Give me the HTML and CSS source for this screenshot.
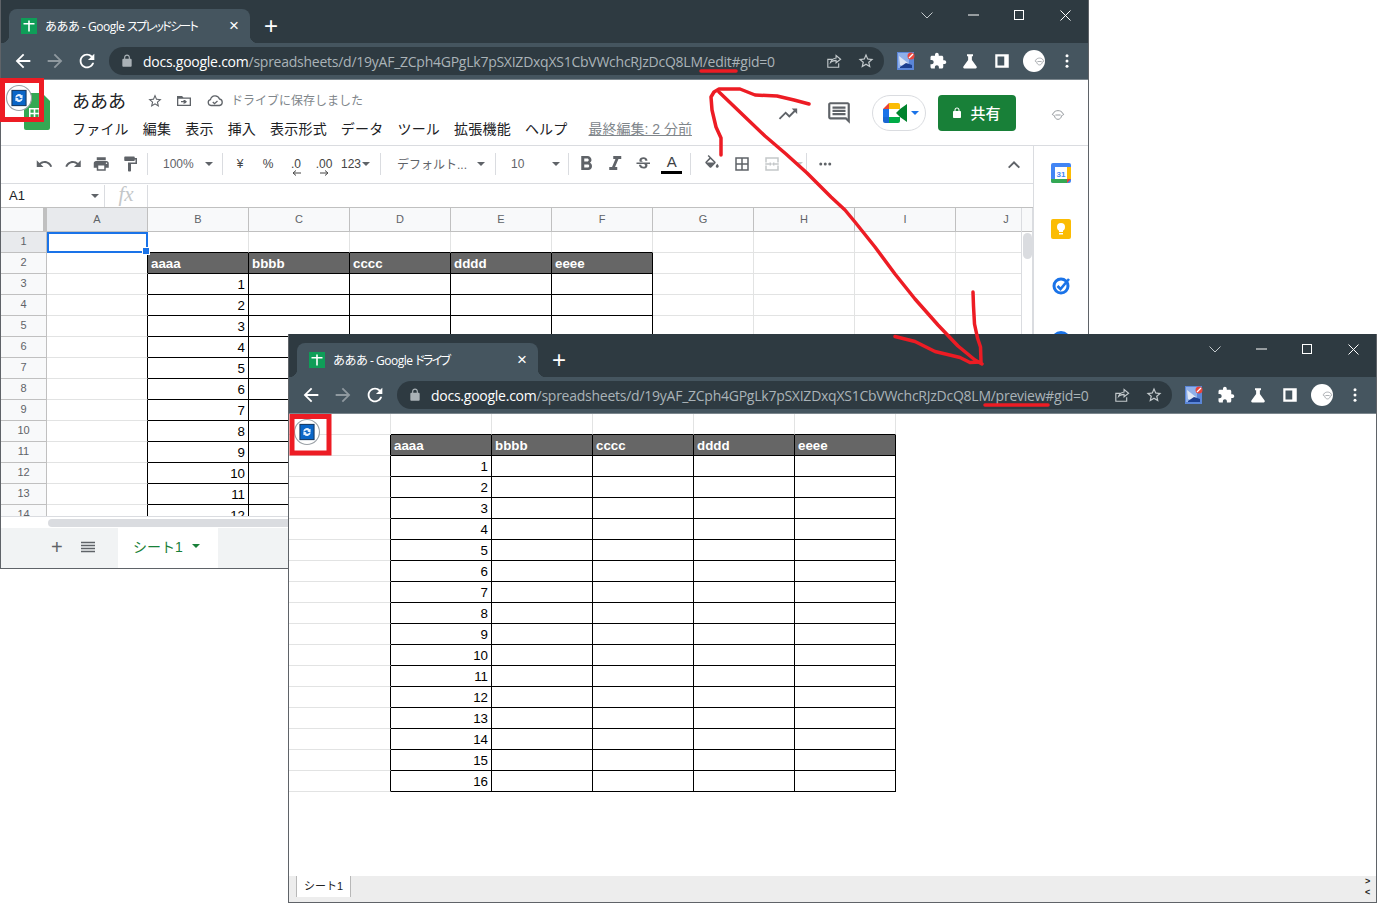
FILE: index.html
```html
<!DOCTYPE html>
<html lang="ja">
<head>
    <meta charset="UTF-8">
    <title>edit / preview</title>
    <link rel="stylesheet" href="styles.css">
</head>
<body>
    <svg class="sprite" xmlns="http://www.w3.org/2000/svg">
        <symbol id="i-back" viewBox="0 0 24 24"><path d="M20 11H7.83l5.59-5.59L12 4l-8 8 8 8 1.41-1.41L7.83 13H20v-2z"/></symbol>
        <symbol id="i-fwd" viewBox="0 0 24 24"><path d="M12 4l-1.41 1.41L16.17 11H4v2h12.17l-5.58 5.59L12 20l8-8z"/></symbol>
        <symbol id="i-reload" viewBox="0 0 24 24"><path d="M17.65 6.35C16.2 4.9 14.21 4 12 4c-4.42 0-7.99 3.58-7.99 8s3.57 8 7.99 8c3.73 0 6.84-2.55 7.73-6h-2.08c-.82 2.33-3.04 4-5.65 4-3.31 0-6-2.69-6-6s2.69-6 6-6c1.66 0 3.14.69 4.22 1.78L13 11h7V4l-2.35 2.35z"/></symbol>
        <symbol id="i-lock" viewBox="0 0 24 24"><path d="M18 8h-1V6c0-2.76-2.24-5-5-5S7 3.24 7 6v2H6c-1.1 0-2 .9-2 2v10c0 1.1.9 2 2 2h12c1.1 0 2-.9 2-2V10c0-1.1-.9-2-2-2zM9 6c0-1.66 1.34-3 3-3s3 1.34 3 3v2H9V6z"/></symbol>
        <symbol id="i-star" viewBox="0 0 24 24"><path d="M22 9.24l-7.19-.62L12 2 9.19 8.63 2 9.24l5.46 4.73L5.82 21 12 17.27 18.18 21l-1.63-7.03L22 9.24zM12 15.4l-3.76 2.27 1-4.28-3.32-2.88 4.38-.38L12 6.1l1.71 4.04 4.38.38-3.32 2.88 1 4.28L12 15.4z"/></symbol>
        <symbol id="i-share" viewBox="0 0 24 24"><path d="M3 9h7v1.500H4.500v9h13V15H19v6H3zM14 3l8 6.500-8 6.500v-3.700c-3.500 0-6 1.200-8 4.200.6-4.600 3.200-8 8-8.700zm1.500 3.200v2.500c-2.900.2-5 1.300-6.300 3 1.700-.9 3.700-1.300 6.300-1.200v2.300l4.100-3.300z"/></symbol>
        <symbol id="i-puzzle" viewBox="0 0 24 24"><path d="M20.5 11H19V7c0-1.1-.9-2-2-2h-4V3.500C13 2.120 11.880 1 10.500 1S8 2.120 8 3.500V5H4c-1.1 0-1.990.9-1.990 2v3.800H3.500c1.490 0 2.700 1.210 2.700 2.700s-1.210 2.700-2.700 2.700H2V20c0 1.100.9 2 2 2h3.800v-1.500c0-1.490 1.210-2.700 2.700-2.700 1.490 0 2.700 1.210 2.700 2.700V22H17c1.100 0 2-.9 2-2v-4h1.500c1.380 0 2.500-1.120 2.500-2.500S21.880 11 20.500 11z"/></symbol>
        <symbol id="i-flask" viewBox="0 0 24 24"><path d="M20.800 19.400L14.500 10.500V5.500h1.500V3H8v2.500h1.500v5L3.200 19.400c-.7 1.100 0 2.600 1.300 2.600h15c1.300 0 2-1.500 1.300-2.600z"/></symbol>
        <symbol id="i-side" viewBox="0 0 24 24"><path d="M3 3h18v18H3zM6 6v12h9V6z" fill-rule="evenodd"/></symbol>
        <symbol id="i-dots" viewBox="0 0 24 24"><circle cx="12" cy="5" r="2"/><circle cx="12" cy="12" r="2"/><circle cx="12" cy="19" r="2"/></symbol>
        <symbol id="i-ext" viewBox="0 0 18 18">
            <rect width="17" height="18" fill="#5b86d8"/>
            <rect x="1" y="1" width="11" height="15" fill="#8fb0ea"/>
            <path d="M2 4l9 7-3 4-5-2z" fill="#dfe7f5"/>
            <path d="M3 15l6-4 6 2v3H3z" fill="#1c3f8f"/>
            <circle cx="14" cy="4" r="3.500" fill="#e8453c"/>
            <path d="M12 6l4-4" stroke="#fff" stroke-width="1.200"/>
        </symbol>
        <symbol id="i-doodle" viewBox="0 0 16 16">
            <path d="M3 6c0-2 3-3 5-3s5 1 5 3c1 0 2 1 1 2-1 .5-2 .5-2 1 0 2-2 4-4 4s-4-2-4-4c0-.5-1-.5-2-1-1-1 0-2 1-2zM5 8h6" fill="none" stroke="#8a8f94"/>
        </symbol>
        <symbol id="i-sheet" viewBox="0 0 16 16">
            <rect width="16" height="16" fill="#0f9d58"/>
            <path d="M2.500 5h4.700V2.500h1.600V5h4.700v1.500H8.800V13.500H7.200V6.500H2.500z" fill="#fff"/>
        </symbol>
        <symbol id="i-badge" viewBox="0 0 24 24">
            <circle cx="12" cy="12" r="11.500" fill="#fff" stroke="#9aa0a6"/>
            <rect x="5.500" y="5" width="13" height="14" fill="#0a66c8" stroke="#173a63"/>
            <path d="M8.500 11.500a3.500 3.500 0 0 1 6-2l.8-.6v3h-3l1-.9a2.300 2.300 0 0 0-3.600.5zM15.500 12.500a3.500 3.500 0 0 1-6 2l-.8.6v-3h3l-1 .9a2.300 2.300 0 0 0 3.600-.5z" fill="#e6f2ff"/>
        </symbol>
    </svg>

    <!-- edit window -->
    <div class="window window-edit">
        <div class="tabstrip">
            <div class="tab">
                <svg class="tab-icon"><use href="#i-sheet"/></svg>
                <span class="tab-title">あああ - Google <span class="kana">スプレッドシート</span></span>
                <span class="tab-close">×</span>
            </div>
            <span class="new-tab">+</span>
            <div class="win-controls">
                <span class="ctrl"><svg width="12" height="7"><path d="M.5.500l5.500 5.500L11.500.500" fill="none" stroke="#c4cacd"/></svg></span>
                <span class="ctrl"><svg width="11" height="2"><path d="M0 1h11" stroke="#fff"/></svg></span>
                <span class="ctrl"><svg width="10" height="10"><rect x=".5" y=".5" width="9" height="9" fill="none" stroke="#fff"/></svg></span>
                <span class="ctrl"><svg width="11" height="11"><path d="M.5.500l10 10M10.500.500l-10 10" stroke="#fff"/></svg></span>
            </div>
        </div>
        <div class="navbar">
            <svg class="nav-icon white"><use href="#i-back"/></svg>
            <svg class="nav-icon dim"><use href="#i-fwd"/></svg>
            <svg class="nav-icon white"><use href="#i-reload"/></svg>
            <div class="omnibox">
                <svg class="lock"><use href="#i-lock"/></svg>
                <span class="url"><b>docs.google.com</b>/spreadsheets/d/19yAF_ZCph4GPgLk7pSXIZDxqXS1CbVWchcRJzDcQ8LM/edit#gid=0</span>
                <svg class="omni-icon"><use href="#i-share"/></svg>
                <svg class="omni-icon"><use href="#i-star"/></svg>
            </div>
            <svg class="ext"><use href="#i-ext"/></svg>
            <svg class="nav-btn"><use href="#i-puzzle"/></svg>
            <svg class="nav-btn"><use href="#i-flask"/></svg>
            <svg class="nav-btn side-btn"><use href="#i-side"/></svg>
            <span class="avatar"><svg><use href="#i-doodle"/></svg></span>
            <svg class="nav-btn dots"><use href="#i-dots"/></svg>
        </div>
        <div class="page">
            <header class="doc-header">
                <svg class="doc-logo" viewBox="0 0 26 37"><path d="M2 0h16l8 8v27a2 2 0 0 1-2 2H2a2 2 0 0 1-2-2V2a2 2 0 0 1 2-2z" fill="#34a853"/><path d="M5 15h11v11H5zm1.500 1.500v3.200h3.200v-3.200zm4.800 0v3.200h3.200v-3.200zm-4.800 4.800v3.200h3.200v-3.200zm4.800 0v3.200h3.200v-3.200z" fill="#fff" fill-rule="evenodd"/></svg>
                <div class="doc-titles">
                    <div class="title-row">
                        <span class="doc-title">あああ</span>
                        <svg class="title-icon star-icon"><use href="#i-star"/></svg>
                        <svg class="title-icon folder-icon" viewBox="0 0 16 16"><path d="M1 3h5l1.500 1.500H15V13H1zM2.300 5.800v5.900h11.400V5.800zM7 7h2l2 1.700-2 1.700H7l1-1.100H5V8h3z" fill="#5f6368" fill-rule="evenodd"/></svg>
                        <svg class="title-icon cloud-icon" viewBox="0 0 16 16"><path d="M4 12.500a3 3 0 0 1-.5-5.900A4.700 4.700 0 0 1 12.500 6a3.300 3.300 0 0 1 0 6.500zM5.800 9l1.700 1.700L10.500 8" fill="none" stroke="#5f6368" stroke-width="1.300"/></svg>
                        <span class="saved">ドライブに保存しました</span>
                    </div>
                    <nav class="menu">
                        <span>ファイル</span><span>編集</span><span>表示</span><span>挿入</span><span>表示形式</span><span>データ</span><span>ツール</span><span>拡張機能</span><span>ヘルプ</span>
                        <a class="last-edit">最終編集: 2 分前</a>
                    </nav>
                </div>
                <div class="header-actions">
                    <svg class="act-trend" viewBox="0 0 24 24"><path d="M16 6l2.290 2.290-4.880 4.880-4-4L2 16.590 3.410 18l6-6 4 4 6.300-6.290L22 12V6z" fill="#5f6368"/></svg>
                    <svg class="act-comment" viewBox="0 0 24 24"><path d="M20 4v13.200L18.800 16H4V4h16m0-2H4c-1.100 0-2 .9-2 2v12c0 1.100.9 2 2 2h14l4 4V4c0-1.100-.9-2-2-2zM6 12h12v2H6zm0-3h12v2H6zm0-3h12v2H6z" fill="#5f6368"/></svg>
                    <div class="meet">
                        <svg width="24" height="20" viewBox="0 0 24 20">
                            <path d="M6 0h9a2 2 0 0 1 2 2v4H6z" fill="#fbbc04"/>
                            <path d="M6 0v6H0z" fill="#ea4335"/>
                            <path d="M0 6h6v8H0z" fill="#1a73e8"/>
                            <path d="M0 14h6v6H2a2 2 0 0 1-2-2z" fill="#1967d2"/>
                            <path d="M6 14h11v4a2 2 0 0 1-2 2H6z" fill="#00ac47"/>
                            <path d="M13 10l4-4v8zM17 6l7-5v18l-7-5z" fill="#00832d"/>
                        </svg>
                        <span class="caret blue"></span>
                    </div>
                    <button class="share"><svg class="share-lock"><use href="#i-lock"/></svg>共有</button>
                    <svg class="act-avatar"><use href="#i-doodle"/></svg>
                </div>
            </header>
            <div class="work">
                <div class="work-main">
                    <div class="toolbar">
                        <svg class="tool" viewBox="0 0 24 24"><path d="M12.500 8c-2.650 0-5.050.99-6.900 2.600L2 7v9h9l-3.620-3.620c1.390-1.160 3.160-1.880 5.120-1.880 3.540 0 6.550 2.310 7.600 5.500l2.370-.78C21.080 11.030 17.150 8 12.500 8z"/></svg>
                        <svg class="tool" viewBox="0 0 24 24"><path d="M18.400 10.600C16.550 8.990 14.150 8 11.500 8c-4.650 0-8.580 3.030-9.960 7.220L3.900 16c1.050-3.190 4.050-5.500 7.600-5.500 1.950 0 3.730.72 5.120 1.880L13 16h9V7l-3.600 3.600z"/></svg>
                        <svg class="tool" viewBox="0 0 24 24"><path d="M19 8H5c-1.660 0-3 1.340-3 3v6h4v4h12v-4h4v-6c0-1.660-1.340-3-3-3zm-3 11H8v-5h8v5zm3-7c-.55 0-1-.45-1-1s.45-1 1-1 1 .45 1 1-.45 1-1 1zm-1-9H6v4h12V3z"/></svg>
                        <svg class="tool" viewBox="0 0 24 24"><path d="M18 4V3c0-.55-.45-1-1-1H5c-.55 0-1 .45-1 1v4c0 .55.45 1 1 1h12c.55 0 1-.45 1-1V6h1v4H9v11c0 .55.45 1 1 1h2c.55 0 1-.45 1-1v-9h8V4h-3z"/></svg>
                        <span class="sep sep-a"></span>
                        <div class="drop drop-zoom"><span>100%</span><span class="caret"></span></div>
                        <span class="sep sep-b"></span>
                        <span class="tool-text">¥</span>
                        <span class="tool-text">%</span>
                        <span class="tool-text dec">.0<svg width="9" height="6"><path d="M9 3H2M4 .5L1 3l3 2.500" fill="none" stroke="#444"/></svg></span>
                        <span class="tool-text dec">.00<svg width="9" height="6"><path d="M0 3h7M5 .5L8 3 5 5.500" fill="none" stroke="#444"/></svg></span>
                        <div class="drop drop-num"><span>123</span><span class="caret"></span></div>
                        <span class="sep sep-c"></span>
                        <div class="drop drop-font"><span>デフォルト...</span><span class="caret"></span></div>
                        <span class="sep"></span>
                        <div class="drop drop-size"><span>10</span><span class="caret"></span></div>
                        <span class="sep sep-b"></span>
                        <svg class="tool big" viewBox="0 0 24 24"><path d="M15.600 10.790c.97-.67 1.650-1.770 1.650-2.790 0-2.260-1.750-4-4-4H7v14h7.040c2.090 0 3.710-1.700 3.710-3.790 0-1.520-.86-2.820-2.150-3.420zM10 6.500h3c.83 0 1.500.67 1.500 1.500s-.67 1.500-1.500 1.500h-3v-3zm3.500 9H10v-3h3.500c.83 0 1.500.67 1.500 1.500s-.67 1.500-1.500 1.500z"/></svg>
                        <svg class="tool big" viewBox="0 0 24 24"><path d="M10 4v3h2.210l-3.420 8H6v3h8v-3h-2.210l3.420-8H18V4z"/></svg>
                        <svg class="tool" viewBox="0 0 24 24"><path d="M6.850 7.080C6.850 4.370 9.450 3 12.240 3c1.640 0 3 .49 3.900 1.280.77.65 1.460 1.730 1.460 3.240h-3.010c0-.31-.05-.59-.15-.85-.29-.86-1.200-1.280-2.250-1.280-1.860 0-2.340 1.020-2.340 1.700 0 .48.25.88.74 1.210.38.25.77.48 1.410.7H7.390c-.21-.34-.54-.89-.54-1.920zM21 12v-2H3v2h9.620c1.150.45 1.960.75 1.960 1.970 0 1-.81 1.670-2.280 1.670-1.540 0-2.930-.54-2.930-2.510H6.400c0 .55.08 1.130.24 1.580.81 2.290 3.290 3.300 5.670 3.300 2.270 0 5.300-.89 5.300-4.050 0-.3-.01-1.160-.48-1.940H21V12z"/></svg>
                        <span class="tool-color"><span>A</span><i></i></span>
                        <span class="sep sep-c sep-d"></span>
                        <svg class="tool wide" viewBox="0 0 24 24"><path d="M16.560 8.940L7.620 0 6.210 1.410l2.380 2.380-5.150 5.150c-.59.59-.59 1.540 0 2.120l5.500 5.500c.29.29.68.44 1.060.44s.77-.15 1.060-.44l5.500-5.500c.59-.58.59-1.530 0-2.120zM5.210 10L10 5.210 14.790 10H5.210zM19 11.500s-2 2.170-2 3.500c0 1.100.9 2 2 2s2-.9 2-2c0-1.330-2-3.500-2-3.500z"/></svg>
                        <svg class="tool wide" viewBox="0 0 24 24"><path d="M3 3v18h18V3H3zm8 16H5v-6h6v6zm0-8H5V5h6v6zm8 8h-6v-6h6v6zm0-8h-6V5h6v6z"/></svg>
                        <svg class="tool wide faded" viewBox="0 0 24 24"><path d="M3 3h18v7h-2V5H5v5H3zm0 11h2v5h14v-5h2v7H3zM3 11h6V9l3 3-3 3v-2H3zm18 0h-6V9l-3 3 3 3v-2h6z"/></svg>
                        <span class="drop drop-merge"><span class="caret faded-caret"></span></span>
                        <span class="sep sep-b"></span>
                        <svg class="tool more" viewBox="0 0 24 24"><circle cx="6" cy="12" r="2"/><circle cx="12" cy="12" r="2"/><circle cx="18" cy="12" r="2"/></svg>
                        <svg class="tool collapse" viewBox="0 0 24 24"><path d="M12 8l-8 8 1.800 1.800L12 11.600l6.200 6.200L20 16z"/></svg>
                    </div>
                    <div class="formula">
                        <span class="namebox"><span>A1</span><span class="caret"></span></span>
                        <span class="sep"></span>
                        <span class="fx">fx</span>
                        <span class="sep"></span>
                    </div>
                    <div class="grid-wrap">
                        <div class="grid-scroll">
                            <table class="sheet">
                                <colgroup><col class="col-rh"><col class="col-cell" span="10"></colgroup>
                                <tr class="col-heads"><th class="corner"></th><th class="on">A</th><th>B</th><th>C</th><th>D</th><th>E</th><th>F</th><th>G</th><th>H</th><th>I</th><th>J</th></tr>
                                <tr><th class="on">1</th><td class="sel"></td><td class="bb"></td><td class="bb"></td><td class="bb"></td><td class="bb"></td><td class="bb"></td><td></td><td></td><td></td><td></td></tr>
                                <tr><th>2</th><td class="br"></td><td class="hd">aaaa</td><td class="hd">bbbb</td><td class="hd">cccc</td><td class="hd">dddd</td><td class="hd">eeee</td><td></td><td></td><td></td><td></td></tr>
                                <tr><th>3</th><td class="br"></td><td class="d n">1</td><td class="d"></td><td class="d"></td><td class="d"></td><td class="d"></td><td></td><td></td><td></td><td></td></tr>
                                <tr><th>4</th><td class="br"></td><td class="d n">2</td><td class="d"></td><td class="d"></td><td class="d"></td><td class="d"></td><td></td><td></td><td></td><td></td></tr>
                                <tr><th>5</th><td class="br"></td><td class="d n">3</td><td class="d"></td><td class="d"></td><td class="d"></td><td class="d"></td><td></td><td></td><td></td><td></td></tr>
                                <tr><th>6</th><td class="br"></td><td class="d n">4</td><td class="d"></td><td class="d"></td><td class="d"></td><td class="d"></td><td></td><td></td><td></td><td></td></tr>
                                <tr><th>7</th><td class="br"></td><td class="d n">5</td><td class="d"></td><td class="d"></td><td class="d"></td><td class="d"></td><td></td><td></td><td></td><td></td></tr>
                                <tr><th>8</th><td class="br"></td><td class="d n">6</td><td class="d"></td><td class="d"></td><td class="d"></td><td class="d"></td><td></td><td></td><td></td><td></td></tr>
                                <tr><th>9</th><td class="br"></td><td class="d n">7</td><td class="d"></td><td class="d"></td><td class="d"></td><td class="d"></td><td></td><td></td><td></td><td></td></tr>
                                <tr><th>10</th><td class="br"></td><td class="d n">8</td><td class="d"></td><td class="d"></td><td class="d"></td><td class="d"></td><td></td><td></td><td></td><td></td></tr>
                                <tr><th>11</th><td class="br"></td><td class="d n">9</td><td class="d"></td><td class="d"></td><td class="d"></td><td class="d"></td><td></td><td></td><td></td><td></td></tr>
                                <tr><th>12</th><td class="br"></td><td class="d n">10</td><td class="d"></td><td class="d"></td><td class="d"></td><td class="d"></td><td></td><td></td><td></td><td></td></tr>
                                <tr><th>13</th><td class="br"></td><td class="d n">11</td><td class="d"></td><td class="d"></td><td class="d"></td><td class="d"></td><td></td><td></td><td></td><td></td></tr>
                                <tr><th>14</th><td class="br"></td><td class="d n">12</td><td class="d"></td><td class="d"></td><td class="d"></td><td class="d"></td><td></td><td></td><td></td><td></td></tr>
                            </table>
                        </div>
                        <div class="vscroll"><div class="vscroll-head"></div><div class="vscroll-thumb"></div></div>
                    </div>
                    <div class="hscroll"><div class="hscroll-thumb"></div></div>
                    <div class="sheet-tabs">
                        <span class="sheet-add">+</span>
                        <svg class="sheet-list" width="14" height="12"><path d="M0 1.500h14M0 4.500h14M0 7.500h14M0 10.500h14" stroke="#5f6368" stroke-width="1.600"/></svg>
                        <div class="sheet-tab"><span>シート1</span><span class="caret green"></span></div>
                    </div>
                </div>
                <aside class="side">
                    <svg class="side-icon" viewBox="0 0 20 20">
                        <rect width="20" height="20" rx="2" fill="#4285f4"/>
                        <rect x="4" y="4" width="12" height="12" fill="#fff"/>
                        <path d="M16 4h4v12h-4z" fill="#fbbc04"/>
                        <path d="M0 16h16v4H2a2 2 0 0 1-2-2z" fill="#34a853"/>
                        <path d="M16 16h4l-4 4z" fill="#ea4335"/>
                        <text x="10" y="13.500" class="cal-num">31</text>
                    </svg>
                    <svg class="side-icon" viewBox="0 0 20 20">
                        <rect width="20" height="20" rx="2" fill="#fbbc04"/>
                        <circle cx="10" cy="8" r="4" fill="#fff"/>
                        <rect x="8" y="11" width="4" height="2" fill="#fff"/>
                        <rect x="8" y="14" width="4" height="1.500" fill="#fff"/>
                    </svg>
                    <svg class="side-icon" viewBox="0 0 20 20">
                        <circle cx="10" cy="11" r="7" fill="none" stroke="#1a73e8" stroke-width="3"/>
                        <path d="M6.500 11l3 3L18 4" fill="none" stroke="#1a73e8" stroke-width="2.600"/>
                    </svg>
                    <svg class="side-icon" viewBox="0 0 20 20"><circle cx="10" cy="10" r="10" fill="#1a73e8"/></svg>
                </aside>
            </div>
        </div>
        <svg class="badge"><use href="#i-badge"/></svg>
    </div>

    <!-- preview window -->
    <div class="window window-preview">
        <div class="tabstrip">
            <div class="tab">
                <svg class="tab-icon"><use href="#i-sheet"/></svg>
                <span class="tab-title">あああ - Google <span class="kana">ドライブ</span></span>
                <span class="tab-close">×</span>
            </div>
            <span class="new-tab">+</span>
            <div class="win-controls">
                <span class="ctrl"><svg width="12" height="7"><path d="M.5.500l5.500 5.500L11.500.500" fill="none" stroke="#c4cacd"/></svg></span>
                <span class="ctrl"><svg width="11" height="2"><path d="M0 1h11" stroke="#fff"/></svg></span>
                <span class="ctrl"><svg width="10" height="10"><rect x=".5" y=".5" width="9" height="9" fill="none" stroke="#fff"/></svg></span>
                <span class="ctrl"><svg width="11" height="11"><path d="M.5.500l10 10M10.500.500l-10 10" stroke="#fff"/></svg></span>
            </div>
        </div>
        <div class="navbar">
            <svg class="nav-icon white"><use href="#i-back"/></svg>
            <svg class="nav-icon dim"><use href="#i-fwd"/></svg>
            <svg class="nav-icon white"><use href="#i-reload"/></svg>
            <div class="omnibox">
                <svg class="lock"><use href="#i-lock"/></svg>
                <span class="url"><b>docs.google.com</b>/spreadsheets/d/19yAF_ZCph4GPgLk7pSXIZDxqXS1CbVWchcRJzDcQ8LM/preview#gid=0</span>
                <svg class="omni-icon"><use href="#i-share"/></svg>
                <svg class="omni-icon"><use href="#i-star"/></svg>
            </div>
            <svg class="ext"><use href="#i-ext"/></svg>
            <svg class="nav-btn"><use href="#i-puzzle"/></svg>
            <svg class="nav-btn"><use href="#i-flask"/></svg>
            <svg class="nav-btn side-btn"><use href="#i-side"/></svg>
            <span class="avatar"><svg><use href="#i-doodle"/></svg></span>
            <svg class="nav-btn dots"><use href="#i-dots"/></svg>
        </div>
        <div class="page page-preview">
            <div class="preview-grid">
                <table class="sheet preview">
                    <colgroup><col class="col-first"><col class="col-cell" span="5"></colgroup>
                    <tr><td></td><td class="bb"></td><td class="bb"></td><td class="bb"></td><td class="bb"></td><td class="bb"></td></tr>
                    <tr><td class="br"></td><td class="hd">aaaa</td><td class="hd">bbbb</td><td class="hd">cccc</td><td class="hd">dddd</td><td class="hd">eeee</td></tr>
                    <tr><td class="br"></td><td class="d n">1</td><td class="d"></td><td class="d"></td><td class="d"></td><td class="d"></td></tr>
                    <tr><td class="br"></td><td class="d n">2</td><td class="d"></td><td class="d"></td><td class="d"></td><td class="d"></td></tr>
                    <tr><td class="br"></td><td class="d n">3</td><td class="d"></td><td class="d"></td><td class="d"></td><td class="d"></td></tr>
                    <tr><td class="br"></td><td class="d n">4</td><td class="d"></td><td class="d"></td><td class="d"></td><td class="d"></td></tr>
                    <tr><td class="br"></td><td class="d n">5</td><td class="d"></td><td class="d"></td><td class="d"></td><td class="d"></td></tr>
                    <tr><td class="br"></td><td class="d n">6</td><td class="d"></td><td class="d"></td><td class="d"></td><td class="d"></td></tr>
                    <tr><td class="br"></td><td class="d n">7</td><td class="d"></td><td class="d"></td><td class="d"></td><td class="d"></td></tr>
                    <tr><td class="br"></td><td class="d n">8</td><td class="d"></td><td class="d"></td><td class="d"></td><td class="d"></td></tr>
                    <tr><td class="br"></td><td class="d n">9</td><td class="d"></td><td class="d"></td><td class="d"></td><td class="d"></td></tr>
                    <tr><td class="br"></td><td class="d n">10</td><td class="d"></td><td class="d"></td><td class="d"></td><td class="d"></td></tr>
                    <tr><td class="br"></td><td class="d n">11</td><td class="d"></td><td class="d"></td><td class="d"></td><td class="d"></td></tr>
                    <tr><td class="br"></td><td class="d n">12</td><td class="d"></td><td class="d"></td><td class="d"></td><td class="d"></td></tr>
                    <tr><td class="br"></td><td class="d n">13</td><td class="d"></td><td class="d"></td><td class="d"></td><td class="d"></td></tr>
                    <tr><td class="br"></td><td class="d n">14</td><td class="d"></td><td class="d"></td><td class="d"></td><td class="d"></td></tr>
                    <tr><td class="br"></td><td class="d n">15</td><td class="d"></td><td class="d"></td><td class="d"></td><td class="d"></td></tr>
                    <tr><td class="br"></td><td class="d n">16</td><td class="d"></td><td class="d"></td><td class="d"></td><td class="d"></td></tr>
                </table>
            </div>
            <div class="preview-tabs">
                <span class="preview-tab">シート1</span>
                <span class="preview-arrows"><span>&gt;</span><span>&lt;</span></span>
            </div>
        </div>
        <svg class="badge"><use href="#i-badge"/></svg>
    </div>

    <!-- red marks drawn on top of the screenshot -->
    <svg class="marks" width="1378" height="903" viewBox="0 0 1378 903">
        <rect x="2.500" y="80.500" width="39" height="39"/>
        <rect x="292" y="416.500" width="37" height="36.500"/>
        <path class="thin" d="M701 71h35M985 405h63"/>
        <path class="thin" d="M721 155v-17l-5-11-4-17-1-13 3-5 5-3h21l15 6 22 1 17 4 15 4"/>
        <path class="thin" d="M719 92l24 23 22 21 21 18 21 19 24 24 14 13 10 12 20 25 20 27 20 25 23 26 20 21 17 14 7 4"/>
        <path class="thin" d="M973 292l.5 14 1 18 3 14 3 9 .5 15-11 .5-10-5-25-6-20-10-20-5"/>
    </svg>
</body>
</html>
```

FILE: styles.css
```css
* {
    box-sizing: border-box;
}
body {
    margin: 0;
    width: 1378px;
    height: 903px;
    position: relative;
    overflow: hidden;
    background-color: #fff;
    font-family: "Liberation Sans", "Noto Sans CJK JP", sans-serif;
}
.sprite {
    position: absolute;
    width: 0;
    height: 0;
}

/* windows */
.window {
    position: absolute;
    width: 1089px;
    height: 569px;
    display: flex;
    flex-direction: column;
    overflow: hidden;
    border: 1px solid #5f6368;
    border-top: none;
    background-color: #fff;
}
.window-edit {
    left: 0;
    top: 0;
}
.window-preview {
    left: 288px;
    top: 334px;
}
.badge {
    position: absolute;
    left: 5px;
    top: 85px;
    width: 26px;
    height: 26px;
}

/* browser frame */
.tabstrip {
    display: flex;
    align-items: flex-end;
    height: 43px;
    padding-left: 8px;
    background-color: #2e3a41;
    flex-shrink: 0;
}
.tab {
    position: relative;
    display: flex;
    align-items: center;
    width: 241px;
    height: 34px;
    padding-left: 12px;
    border-radius: 8px 8px 0 0;
    background-color: #45555f;
    color: #fff;
}
.tab::before,
.tab::after {
    content: "";
    position: absolute;
    bottom: 0;
    width: 8px;
    height: 8px;
}
.tab::before {
    left: -8px;
    background: radial-gradient(circle at 0 0, transparent 8px, #45555f 8.500px);
}
.tab::after {
    right: -8px;
    background: radial-gradient(circle at 100% 0, transparent 8px, #45555f 8.500px);
}
.tab-icon {
    width: 16px;
    height: 16px;
    margin-right: 8px;
    flex-shrink: 0;
}
.tab-title {
    flex: 1;
    font-family: "Open Sans", "Noto Sans CJK JP", sans-serif;
    font-size: 12px;
    letter-spacing: -0.5px;
    white-space: nowrap;
    overflow: hidden;
}
.tab-title .kana {
    font-feature-settings: "palt";
    letter-spacing: -1.7px;
}
.tab-close {
    width: 16px;
    margin-right: 8px;
    font-size: 17px;
    line-height: 16px;
    text-align: center;
}
.new-tab {
    align-self: center;
    margin: 9px 0 0 14px;
    color: #fff;
    font-size: 24px;
    line-height: 24px;
}
.win-controls {
    align-self: flex-start;
    display: flex;
    margin-left: auto;
}
.ctrl {
    display: flex;
    align-items: center;
    justify-content: center;
    width: 46px;
    height: 30px;
}
.navbar {
    display: flex;
    align-items: center;
    height: 37px;
    padding-left: 11px;
    background-color: #45555f;
    border-bottom: 1px solid #7b868d;
    flex-shrink: 0;
}
.nav-icon {
    width: 22px;
    height: 22px;
    margin-right: 10px;
}
.nav-icon.white {
    fill: #fff;
}
.nav-icon.dim {
    fill: #8f999f;
}
.omnibox {
    display: flex;
    align-items: center;
    width: 775px;
    height: 28px;
    margin-left: 1px;
    padding-left: 11px;
    border-radius: 14px;
    background-color: #2e3a41;
}
.lock {
    width: 14px;
    height: 14px;
    margin-right: 9px;
    fill: #aab2b7;
    flex-shrink: 0;
}
.url {
    flex: 1;
    font-family: "Open Sans", sans-serif;
    font-size: 14px;
    letter-spacing: -0.25px;
    color: #aab3b8;
    white-space: nowrap;
}
.url b {
    font-weight: 400;
    color: #fff;
}
.omni-icon {
    width: 18px;
    height: 18px;
    margin-right: 14px;
    fill: #c3c9cc;
    flex-shrink: 0;
}
.omni-icon:last-child {
    margin-right: 9px;
}
.ext {
    width: 18px;
    height: 18px;
    margin-left: 13px;
    margin-right: 14px;
    flex-shrink: 0;
}
.nav-btn {
    width: 18px;
    height: 18px;
    margin-right: 14px;
    fill: #fff;
    flex-shrink: 0;
}
.nav-btn.side-btn {
    margin-right: 12px;
}
.nav-btn.dots {
    margin-left: 2px;
    margin-right: 0;
}
.avatar {
    display: flex;
    align-items: center;
    justify-content: flex-end;
    width: 22px;
    height: 22px;
    margin-right: 11px;
    border-radius: 50%;
    background-color: #fff;
    flex-shrink: 0;
}
.avatar svg {
    width: 11px;
    height: 11px;
}
.page {
    flex: 1;
    display: flex;
    flex-direction: column;
    min-height: 0;
}

/* docs header */
.doc-header {
    display: flex;
    height: 66px;
    border-bottom: 1px solid #dadce0;
    flex-shrink: 0;
}
.doc-logo {
    width: 26px;
    height: 37px;
    margin: 13px 0 0 23px;
    flex-shrink: 0;
}
.doc-titles {
    margin-left: 22px;
    color: #202124;
}
.title-row {
    display: flex;
    align-items: center;
    height: 24px;
    margin-top: 9px;
}
.doc-title {
    margin-top: 2px;
    font-size: 18px;
    line-height: 24px;
}
.title-icon {
    width: 16px;
    height: 16px;
    fill: #5f6368;
}
.star-icon {
    margin-left: 21px;
}
.folder-icon {
    margin-left: 13px;
}
.cloud-icon {
    margin-left: 15px;
}
.saved {
    margin-left: 8px;
    margin-top: -3px;
    font-size: 12px;
    color: #80868b;
}
.menu {
    display: flex;
    align-items: center;
    gap: 14px;
    margin-top: 5px;
    font-size: 14px;
    letter-spacing: 0.2px;
    line-height: 22px;
    white-space: nowrap;
}
.last-edit {
    margin-left: 7px;
    color: #80868b;
    letter-spacing: 0;
    text-decoration: underline;
}
.header-actions {
    flex: 1;
    display: flex;
    align-items: center;
}
.act-trend {
    width: 22px;
    height: 22px;
    margin-left: auto;
    margin-top: 2px;
}
.act-comment {
    width: 26px;
    height: 26px;
    margin-left: 27px;
}
.meet {
    display: flex;
    align-items: center;
    gap: 4px;
    width: 54px;
    height: 36px;
    margin-left: 20px;
    padding-left: 10px;
    border: 1px solid #dadce0;
    border-radius: 18px;
}
.share {
    display: flex;
    align-items: center;
    justify-content: center;
    gap: 7px;
    width: 78px;
    height: 36px;
    margin-left: 12px;
    padding: 0 2px 0 0;
    border: none;
    border-radius: 4px;
    background-color: #188038;
    color: #fff;
    font-family: inherit;
    font-size: 15px;
    font-weight: 500;
}
.share-lock {
    width: 12px;
    height: 12px;
    fill: #fff;
}
.act-avatar {
    width: 14px;
    height: 14px;
    margin: 4px 23px 0 35px;
}

/* working area */
.work {
    flex: 1;
    display: flex;
    min-height: 0;
}
.work-main {
    flex: 1;
    display: flex;
    flex-direction: column;
    min-width: 0;
}
.toolbar {
    display: flex;
    align-items: center;
    height: 38px;
    padding: 0 0 2px 29px;
    border-bottom: 1px solid #dadce0;
    color: #5f6368;
    font-size: 12px;
    flex-shrink: 0;
}
.tool {
    width: 28.500px;
    height: 18px;
    fill: #5f6368;
    flex-shrink: 0;
}
.tool.big {
    height: 24px;
}
.tool.wide {
    width: 30px;
}
.tool.faded {
    fill: #c4c7c9;
}
.tool.more {
    margin-left: 1px;
}
.tool.collapse {
    margin-left: auto;
    margin-right: 5px;
    width: 28px;
}
.sep {
    width: 1px;
    height: 22px;
    background-color: #dadce0;
    flex-shrink: 0;
}
.sep-a {
    margin-left: 3px;
}
.sep-b {
    margin-right: 3px;
}
.sep-c {
    margin-left: 4px;
}
.sep-d {
    margin-right: 6px;
}
.drop {
    display: flex;
    align-items: center;
    justify-content: space-between;
    flex-shrink: 0;
}
.drop-zoom {
    width: 74px;
    padding: 0 9px 0 15px;
}
.drop-num {
    width: 38px;
    padding: 0 6px 0 3px;
    color: #444;
}
.drop-font {
    width: 114px;
    padding: 0 10px 0 16px;
}
.drop-size {
    width: 72px;
    padding: 0 8px 0 15px;
}
.drop-merge {
    width: 19px;
    justify-content: flex-start;
    padding-left: 8px;
}
.caret {
    width: 0;
    height: 0;
    border-left: 4px solid transparent;
    border-right: 4px solid transparent;
    border-top: 4px solid #5f6368;
    flex-shrink: 0;
}
.caret.blue {
    border-top-color: #1a73e8;
}
.caret.green {
    border-top-color: #188038;
}
.caret.faded-caret {
    border-top-color: #c4c7c9;
}
.tool-text {
    position: relative;
    width: 28px;
    color: #444;
    text-align: center;
    flex-shrink: 0;
}
.tool-text.dec svg {
    position: absolute;
    left: 10px;
    top: 13px;
}
.tool-color {
    display: flex;
    flex-direction: column;
    align-items: center;
    width: 28.500px;
    color: #3c4043;
    font-size: 15px;
    line-height: 15px;
    flex-shrink: 0;
}
.tool-color i {
    display: block;
    width: 21px;
    height: 3px;
    margin-top: 2px;
    background-color: #000;
}
.formula {
    display: flex;
    align-items: center;
    height: 24px;
    border-bottom: 1px solid #c0c0c0;
    flex-shrink: 0;
}
.namebox {
    display: flex;
    align-items: center;
    justify-content: space-between;
    width: 103px;
    padding: 0 5px 0 8px;
    font-size: 13px;
    color: #202124;
}
.fx {
    width: 42px;
    margin-top: -2px;
    font-family: "Liberation Serif", serif;
    font-size: 21px;
    font-style: italic;
    color: #c4c7c9;
    text-align: center;
}

/* sheet grid */
.grid-wrap {
    flex: 1;
    display: flex;
    min-height: 0;
}
.grid-scroll {
    width: 1020px;
    overflow: hidden;
}
.sheet {
    table-layout: fixed;
    border-collapse: separate;
    border-spacing: 0;
    width: 1056px;
    font-size: 13.333px;
}
.col-rh {
    width: 46px;
}
.col-cell {
    width: 101px;
}
.col-first {
    width: 102px;
}
.sheet tr {
    height: 21px;
}
.sheet td,
.sheet th {
    height: 21px;
    padding: 0;
    overflow: hidden;
    white-space: nowrap;
}
.sheet td {
    border-right: 1px solid #e2e3e3;
    border-bottom: 1px solid #e2e3e3;
    color: #000;
}
.sheet th {
    padding-bottom: 2px;
    border-right: 1px solid #c0c0c0;
    border-bottom: 1px solid #c0c0c0;
    background-color: #f8f9fa;
    color: #5f6368;
    font-size: 11px;
    font-weight: 400;
}
.sheet th.on {
    background-color: #e8eaed;
}
.col-heads,
.col-heads th {
    height: 24px;
}
.sheet th.corner {
    border-right: 4px solid #c0c0c0;
}
.sheet td.bb {
    border-bottom-color: #000;
}
.sheet td.br {
    border-right-color: #000;
}
.sheet td.d {
    border-right-color: #000;
    border-bottom-color: #000;
}
.sheet td.hd {
    padding-left: 3px;
    background-color: #666;
    border-right-color: #000;
    border-bottom-color: #000;
    color: #fff;
    font-weight: 700;
}
.sheet td.n {
    padding-right: 3px;
    text-align: right;
}
.sheet td.sel {
    border: 2px solid #1a73e8;
    position: relative;
    overflow: visible;
}
.sheet td.sel::after {
    content: "";
    position: absolute;
    right: -4px;
    bottom: -4px;
    width: 6px;
    height: 6px;
    background-color: #1a73e8;
    border: 1px solid #fff;
    box-sizing: content-box;
}
.vscroll {
    width: 12px;
    border-right: 1px solid #dadce0;
    border-left: 1px solid #dadce0;
    flex-shrink: 0;
}
.vscroll-head {
    height: 24px;
    background-color: #f8f9fa;
    border-bottom: 1px solid #c0c0c0;
}
.vscroll-thumb {
    width: 9px;
    height: 26px;
    margin: 1px 0 0 1px;
    border-radius: 5px;
    background-color: #dadce0;
}
.hscroll {
    height: 12px;
    padding: 2px 0 1px 47px;
    border-top: 1px solid #dadce0;
    flex-shrink: 0;
}
.hscroll-thumb {
    height: 8px;
    border-radius: 4px;
    background-color: #dadce0;
}
.sheet-tabs {
    display: flex;
    align-items: center;
    height: 40px;
    background-color: #f1f3f4;
    flex-shrink: 0;
}
.sheet-add {
    margin: -2px 0 0 50px;
    width: 14px;
    color: #5f6368;
    font-size: 20px;
    line-height: 20px;
}
.sheet-list {
    margin: -2px 0 0 16px;
}
.sheet-tab {
    display: flex;
    align-items: center;
    gap: 9px;
    width: 100px;
    height: 40px;
    margin-left: 23px;
    padding: 0 0 5px 15px;
    background-color: #fff;
    color: #188038;
    font-size: 14px;
}
.side {
    display: flex;
    flex-direction: column;
    align-items: center;
    gap: 36px;
    width: 55px;
    padding-top: 17px;
    border-left: 1px solid #dadce0;
    flex-shrink: 0;
}
.side-icon {
    width: 20px;
    height: 20px;
    flex-shrink: 0;
}
.cal-num {
    font-family: "Liberation Sans", sans-serif;
    font-size: 8px;
    font-weight: 700;
    fill: #4285f4;
    text-anchor: middle;
}

/* preview page */
.preview-grid {
    flex: 1;
    min-height: 0;
}
.sheet.preview {
    width: 607px;
}
.preview-tabs {
    display: flex;
    height: 26px;
    padding-left: 7px;
    background-color: #ededed;
    flex-shrink: 0;
}
.preview-tab {
    width: 55px;
    height: 21px;
    border-left: 1px solid #b8b8b8;
    border-right: 1px solid #b8b8b8;
    background-color: #fff;
    color: #222;
    font-size: 11px;
    line-height: 21px;
    text-align: center;
}
.preview-arrows {
    display: flex;
    flex-direction: column;
    margin-left: auto;
    width: 11px;
    font-size: 9px;
    line-height: 11px;
    color: #222;
    font-weight: 700;
}

/* red marks */
.marks {
    position: absolute;
    left: 0;
    top: 0;
    fill: none;
    stroke: #ed1c24;
    stroke-width: 5;
    pointer-events: none;
}
.marks .thin {
    stroke-width: 3.500;
    stroke-linejoin: round;
    stroke-linecap: round;
}
```
